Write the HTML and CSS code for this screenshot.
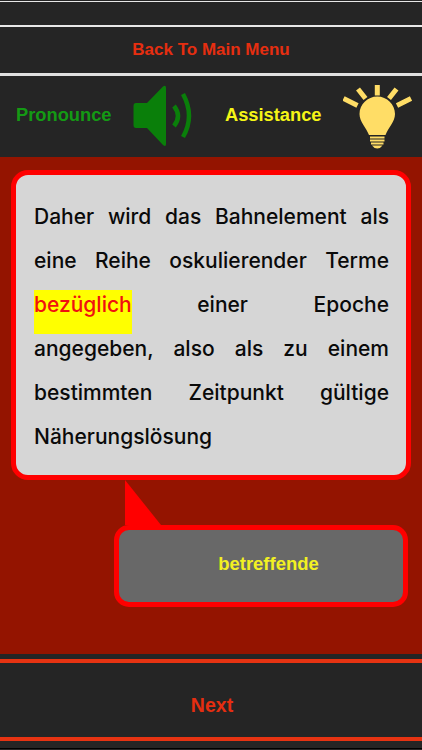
FILE: index.html
```html
<!DOCTYPE html>
<html lang="de">
<head>
<meta charset="UTF-8">
<title>Back To Main Menu</title>
<link rel="stylesheet" href="styles.css">
</head>
<body>
<div class="blank"></div>
<div class="back">Back To Main Menu</div>
<div class="tools">
  <span class="pronounce">Pronounce</span>
  <svg class="speaker" viewBox="0 0 60 62" width="60" height="62">
    <path d="M3 18H14L30 1.5Q33 -0.5 33 3V59Q33 62.500 30 60L14 43H3Q0.500 43 0.500 40V21Q0.500 18 3 18Z" fill="#0a7f0a"/>
    <path d="M41 21Q49 31 41 41M50 9Q62 31 50 52" fill="none" stroke="#0a7f0a" stroke-width="4.500"/>
  </svg>
  <span class="assist">Assistance</span>
  <svg class="bulb" viewBox="0 0 70 66" width="70" height="66">
    <path d="M34.300 1V11.500M15 5L22.500 14.500M53.500 5L46 14.500M0.500 14.500L14.500 21.500M68 14.500L54 21.500" fill="none" stroke="#ffdd66" stroke-width="5"/>
    <path d="M34.300 12.500C24.500 12.500 16.500 20.500 16.500 30C16.500 38 23 43 26 51H42.500C45.500 43 52 38 52 30C52 20.500 44 12.500 34.300 12.500Z" fill="#ffdd66"/>
    <path d="M27 53.500H41.500M27 56.500H41.500M28 59.500H40.500" fill="none" stroke="#ffdd66" stroke-width="2"/>
    <path d="M29 61.500H39.500Q37.500 64.500 34.300 64.500Q31 64.500 29 61.500Z" fill="#ffdd66"/>
  </svg>
</div>
<div class="main">
  <div class="card">
    <p class="sentence">Daher wird das Bahnelement als eine Reihe oskulierender Terme <span class="hl">bezüglich</span> einer Epoche angegeben, also als zu einem bestimmten Zeitpunkt gültige Näherungslösung</p>
  </div>
  <div class="answer">
    <div class="tail"></div>
    betreffende
  </div>
</div>
<div class="footer">
  <div class="next">Next</div>
</div>
</body>
</html>
```

FILE: styles.css
```css
html, body { margin: 0; padding: 0; }
body { width: 422px; height: 750px; overflow: hidden; background: #252525; font-family: "Liberation Sans", sans-serif; font-weight: bold; font-size: 18.300px; }
.blank { height: 23px; margin-top: 1px; border-top: 1px solid #e8e8e8; border-bottom: 2px solid #e8e8e8; }
.back { height: 46px; line-height: 46px; font-size: 17px; text-align: center; color: #e62e10; border-bottom: 3px solid #e0e0e0; }
.tools { height: 81px; display: flex; align-items: flex-start; }
.tools span { margin-top: 28px; line-height: 22px; }
.pronounce { color: #149a14; margin-left: 16px; width: 96px; }
.speaker { margin: 9px 0 0 21px; }
.assist { color: #f5f516; margin-left: 32px; width: 98px; }
.bulb { margin: 8px 0 0 20px; }
.main { height: 497px; box-sizing: border-box; padding-top: 13px; background: #941400; }
.card { margin: 0 11px; height: 310px; box-sizing: border-box; padding: 20px 17px 0 18px; border: 5px solid #ff0000; border-radius: 17px; background: #d6d6d6; }
.sentence { margin: 0; font-family: Inter, "Liberation Sans", sans-serif; font-weight: 500; font-size: 21px; line-height: 44px; color: #0a0a0a; text-align: justify; }
.hl { color: #f01010; background: #ffff00; box-shadow: 0 -2px 0 #ffff00, 0 17px 0 #ffff00; }
.answer { position: relative; margin: 45px 14px 0 114px; height: 82px; box-sizing: border-box; padding-left: 15px; border: 5px solid #ff0000; border-radius: 15px; background: #686868; color: #f2f022; font-size: 18.500px; line-height: 68px; text-align: center; }
.tail { position: absolute; left: 6px; top: -50px; width: 0; height: 0; border-left: 36px solid #ff0000; border-top: 45px solid transparent; }
.footer { height: 95px; box-sizing: border-box; padding-top: 5px; border-bottom: 1px solid #000; }
.next { height: 74px; box-sizing: content-box; padding-left: 2px; line-height: 84px; border-top: 4px solid #e63312; border-bottom: 4px solid #e63312; color: #e62e10; font-size: 19.500px; text-align: center; }
```
